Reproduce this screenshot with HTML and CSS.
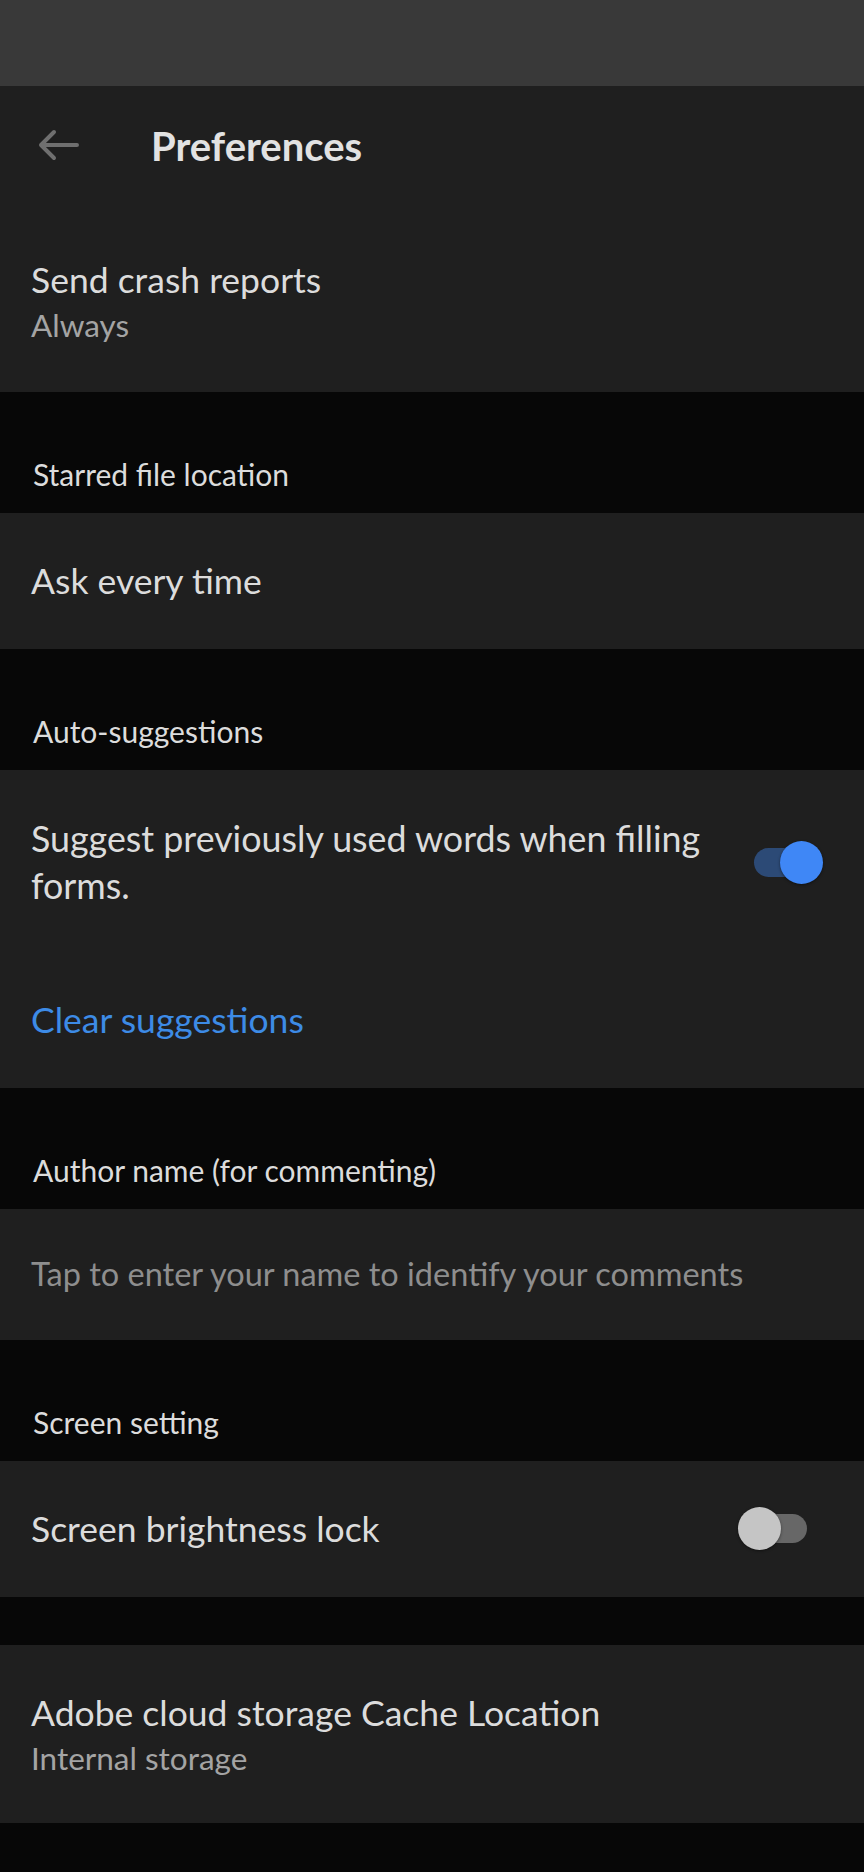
FILE: index.html
```html
<!DOCTYPE html>
<html lang="en">
<head>
    <meta charset="UTF-8">
    <meta name="viewport" content="width=device-width, initial-scale=1.0">
    <title>Preferences</title>
    <link rel="stylesheet" href="styles.css">
</head>
<body>
    <div class="status-bar"></div>

    <div class="app-bar">
        <svg class="back-icon" width="42" height="32" viewBox="0 0 42 32">
            <path d="M3 16 H39 M16 3 L3 16 L16 29" fill="none" stroke="#6f6f6f" stroke-width="4" stroke-linecap="round" stroke-linejoin="round"/>
        </svg>
        <h1 class="app-title">Preferences</h1>
    </div>

    <div class="item item-first">
        <div class="item-title">Send crash reports</div>
        <div class="item-sub">Always</div>
    </div>

    <div class="section-label">Starred file location</div>
    <div class="item">
        <div class="item-title">Ask every time</div>
    </div>

    <div class="section-label">Auto-suggestions</div>
    <div class="item">
        <div class="item-row">
            <div class="item-title multi">Suggest previously used words when filling forms.</div>
            <div class="switch on"><span class="track"></span><span class="knob"></span></div>
        </div>
        <div class="item-link">Clear suggestions</div>
    </div>

    <div class="section-label">Author name (for commenting)</div>
    <div class="item">
        <div class="item-hint">Tap to enter your name to identify your comments</div>
    </div>

    <div class="section-label">Screen setting</div>
    <div class="item">
        <div class="item-row">
            <div class="item-title">Screen brightness lock</div>
            <div class="switch"><span class="track"></span><span class="knob"></span></div>
        </div>
    </div>

    <div class="spacer"></div>

    <div class="item item-last">
        <div class="item-title">Adobe cloud storage Cache Location</div>
        <div class="item-sub">Internal storage</div>
    </div>
</body>
</html>
```

FILE: styles.css
```css
body {
    margin: 0;
    padding: 0;
    background-color: #070707;
    font-family: Lato, "Open Sans", sans-serif;
    color: #dcdcdc;
}
.status-bar {
    height: 86px;
    background-color: #393939;
}
.app-bar {
    height: 120px;
    display: flex;
    align-items: center;
    padding-left: 38px;
    background-color: #1f1f1f;
}
.back-icon {
    display: block;
    margin-top: -2px;
}
.app-title {
    margin: 0 0 0 71px;
    font-size: 40px;
    line-height: 48px;
    font-weight: 700;
    color: #e2e2e2;
}
.item {
    background-color: #1f1f1f;
    padding: 45px 41px 46px 31px;
}
.item-first {
    padding-top: 51px;
    padding-bottom: 44px;
}
.item-last {
    padding-bottom: 42px;
}
.item-row {
    display: flex;
    align-items: center;
    justify-content: space-between;
}
.item-title {
    font-size: 35.5px;
    line-height: 45px;
    color: #dcdcdc;
}
.item-title.multi {
    font-size: 35.8px;
    line-height: 47px;
    max-width: 690px;
}
.item-sub {
    font-size: 31.5px;
    line-height: 46px;
    color: #a4a4a4;
}
.item-link {
    margin-top: 88px;
    font-size: 35.5px;
    line-height: 45px;
    color: #3d8be6;
}
.item-hint {
    font-size: 32.5px;
    line-height: 40px;
    color: #8e8e8e;
}
.section-label {
    padding: 62px 33px 19px 33px;
    font-size: 30px;
    line-height: 40px;
    color: #dcdcdc;
}
.spacer {
    height: 48px;
}
.switch {
    position: relative;
    width: 85px;
    height: 43px;
    flex-shrink: 0;
}
.switch .track {
    position: absolute;
    left: 16px;
    top: 7px;
    width: 53px;
    height: 29px;
    border-radius: 15px;
    background-color: #676767;
}
.switch .knob {
    position: absolute;
    left: 0;
    top: 0;
    width: 43px;
    height: 43px;
    border-radius: 50%;
    background-color: #c5c5c5;
    box-shadow: 0 1px 3px rgba(0, 0, 0, 0.45);
}
.switch.on .track {
    background-color: #2c4a76;
}
.switch.on .knob {
    left: 42px;
    background-color: #3f87f6;
}
```
